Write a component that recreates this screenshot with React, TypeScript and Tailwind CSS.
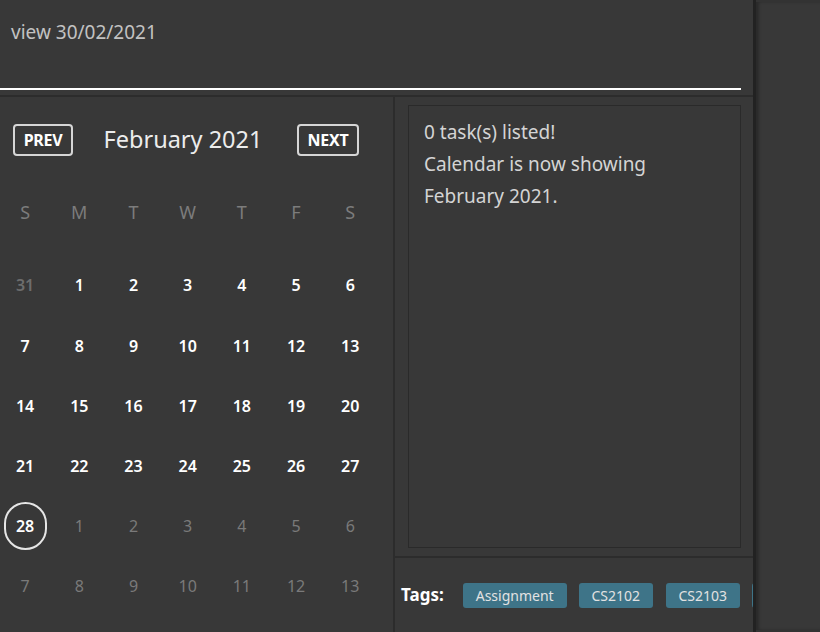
const font = { fontFamily: '"Noto Sans", "Open Sans", sans-serif' }

const weekDays = ['S', 'M', 'T', 'W', 'T', 'F', 'S']

type Day = { n: number; kind: 'prev' | 'cur' | 'next'; today?: boolean }

function buildDays(): Day[] {
  const days: Day[] = [{ n: 31, kind: 'prev' }]
  for (let i = 1; i <= 28; i++) days.push({ n: i, kind: 'cur', today: i === 28 })
  for (let i = 1; i <= 13; i++) days.push({ n: i, kind: 'next' })
  return days
}

function Calendar() {
  const days = buildDays()
  return (
    <div className="w-[395px] shrink-0 border-r-2 border-[#2c2c2c] overflow-hidden">
      <div className="flex items-center justify-between pl-[13px] pr-[34px] pt-[25px]">
        <button className="h-[32px] w-[60px] rounded-[4px] border-2 border-[#d6d6d6] text-[16px] font-bold text-white tracking-[-0.3px]">
          PREV
        </button>
        <div className="text-[23.5px] text-[#ececec] -ml-[4px]">February 2021</div>
        <button className="h-[32px] w-[62px] rounded-[4px] border-2 border-[#d6d6d6] text-[16px] font-bold text-white tracking-[-0.3px]">
          NEXT
        </button>
      </div>
      <div className="grid grid-cols-[repeat(7,54.2px)] -ml-[2px] mt-[40px]">
        {weekDays.map((d, i) => (
          <div key={i} className="h-[30px] flex items-center justify-center text-[18px] text-[#7c7c7c]">
            {d}
          </div>
        ))}
      </div>
      <div className="grid grid-cols-[repeat(7,54.2px)] auto-rows-[60.2px] -ml-[2px] mt-[28px]">
        {days.map((d, i) => (
          <div key={i} className="flex items-center justify-center">
            {d.today ? (
              <div className="w-[43px] h-[48px] rounded-full border-2 border-[#e6e6e6] flex items-center justify-center text-[16px] font-semibold text-white">
                {d.n}
              </div>
            ) : (
              <span
                className={
                  d.kind === 'cur'
                    ? 'text-[16px] font-semibold text-white'
                    : d.kind === 'prev'
                      ? 'text-[16px] font-semibold text-[#6d6d6d]'
                      : 'text-[16px] text-[#7a7a7a]'
                }
              >
                {d.n}
              </span>
            )}
          </div>
        ))}
      </div>
    </div>
  )
}

export default function App() {
  return (
    <div className="flex w-[820px] h-[632px] bg-[#383838] overflow-hidden" style={font}>
      <div className="w-[756px] shrink-0 flex flex-col border-r-[3px] border-[#222222]">
        <div className="h-[97px] shrink-0 border-b-2 border-[#2c2c2c] flex flex-col">
          <div className="pl-[11px] pt-[18px] text-[19px] text-[#c2c2c2] h-[88px]">view 30/02/2021</div>
          <div className="h-[2px] w-[741px] bg-white" />
        </div>
        <div className="flex flex-1 min-h-0">
          <Calendar />
          <div className="flex-1 min-w-0 flex flex-col">
            <div className="h-[461px] shrink-0 border-b-2 border-[#2c2c2c] pl-[13px] pr-[12px] pt-[8px] pb-[8px]">
              <div className="h-full border border-[#2a2a2a] pl-[15px] pt-[10px] text-[19px] leading-[32px] text-[#d4d4d4]">
                <div>0 task(s) listed!</div>
                <div>Calendar is now showing</div>
                <div>February 2021.</div>
              </div>
            </div>
            <div className="flex items-center pl-[6px] flex-1 overflow-hidden whitespace-nowrap">
              <span className="text-[17px] font-bold text-white mr-[19px]">Tags:</span>
              <span className="h-[25px] w-[104px] shrink-0 rounded-[3px] bg-[#3e7488] text-[#e2e2e2] text-[14px] flex items-center justify-center mr-[12px]">
                Assignment
              </span>
              <span className="h-[25px] w-[74px] shrink-0 rounded-[3px] bg-[#3e7488] text-[#e2e2e2] text-[14px] flex items-center justify-center mr-[13px]">
                CS2102
              </span>
              <span className="h-[25px] w-[74px] shrink-0 rounded-[3px] bg-[#3e7488] text-[#e2e2e2] text-[14px] flex items-center justify-center mr-[12px]">
                CS2103
              </span>
              <span className="h-[25px] w-[74px] shrink-0 rounded-[3px] bg-[#3e7488]" />
            </div>
          </div>
        </div>
      </div>
      <div className="flex-1 bg-[#383838] border-t-[2px] border-b-[2px] border-[#333333] shadow-[inset_3px_0_3px_rgba(0,0,0,0.25)]" />
    </div>
  )
}
